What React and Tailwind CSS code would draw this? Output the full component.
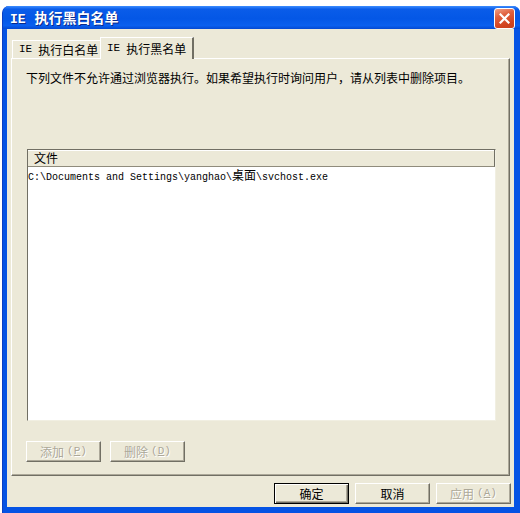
import React from "react";

const CJK = '"Noto Sans CJK SC", "Noto Sans", sans-serif';

const cjk = "font-['Noto_Sans_CJK_SC',sans-serif]";
const mono = "font-['Liberation_Mono','Noto_Sans_CJK_SC',monospace]";

function CloseButton() {
  return (
    <div className="w-[21px] h-[21px] rounded-[3px] border border-white bg-[linear-gradient(160deg,#f0a086_0%,#e0603e_35%,#d2431f_75%,#c8421f_100%)] flex items-center justify-center mt-[2px]">
      <svg width="11" height="11" viewBox="0 0 11 11">
        <path d="M1.5 1.5 L9.5 9.5 M9.5 1.5 L1.5 9.5" stroke="#fff" strokeWidth="2.2" strokeLinecap="square" />
      </svg>
    </div>
  );
}

function Tab({ label, active }) {
  if (active) {
    return (
      <div className="relative z-10 -ml-[1px] -mb-[1px] h-[22px] w-[94px] bg-[#ece9d8] border-t border-l border-white border-r-2 border-r-[#716f64] flex items-center pl-[6px] text-[12px] text-black leading-none">
        <span className={`${mono} text-[11px] mr-[6px]`}>IE</span>
        <span className={cjk}>{label}</span>
      </div>
    );
  }
  return (
    <div className="h-[18px] w-[89px] bg-[#ece9d8] border-t border-l border-white flex items-center pl-[6px] text-[12px] text-black leading-none">
      <span className={`${mono} text-[11px] mr-[6px]`}>IE</span>
      <span className={cjk}>{label}</span>
    </div>
  );
}

function Btn({ label, hot, disabled, isDefault, plain }) {
  const color = disabled ? "text-[#aca899] [text-shadow:1px_1px_0_#fff]" : "text-black";
  return (
    <div
      className={`w-[75px] h-[21px] bg-[#ece9d8] flex items-center justify-center text-[12px] leading-none ${color} ${
        isDefault
          ? "border border-black shadow-[inset_1px_1px_0_#fff,inset_-1px_-1px_0_#716f64,inset_-2px_-2px_0_#aca899]"
          : "border-t border-l border-white border-b border-r border-b-[#716f64] border-r-[#716f64] shadow-[inset_-1px_-1px_0_#aca899]"
      }`}
    >
      <span className={cjk}>{label}</span>
      {!plain && (
        <span className={`${mono} text-[11px] ml-[3px]`}>
          (<span className="underline">{hot}</span>)
        </span>
      )}
    </div>
  );
}

export default function App() {
  return (
    <div className="w-[520px] h-[513px] bg-white pt-[6px] pl-[2px] overflow-hidden" style={{ fontFamily: CJK }}>
      <div className="w-[518px] h-[507px] flex flex-col rounded-t-[7px] bg-[#0553e4] border-l border-l-[#0a3fc4] overflow-hidden">
        {/* title bar */}
        <div className="h-[23px] shrink-0 flex items-center pl-[7px] pr-[5px] bg-[linear-gradient(180deg,#3d8dff_0%,#0a5ce9_14%,#0457e6_55%,#0a60ef_85%,#0449d2_100%)]">
          <div className="flex items-baseline text-white font-bold text-[14px] leading-none [text-shadow:1px_1px_0_#0a2a8a]">
            <span className={`${mono} text-[13px] mr-[9px]`}>IE</span>
            <span className={cjk}>执行黑白名单</span>
          </div>
          <div className="flex-1" />
          <CloseButton />
        </div>

        {/* body */}
        <div className="flex-1 ml-[4px] mr-[6px] mb-[6px] bg-[#ece9d8] flex flex-col">
          {/* tabs */}
          <div className="h-[29px] shrink-0 flex items-end pl-[5px]">
            <Tab label="执行白名单" />
            <Tab label="执行黑名单" active />
          </div>

          {/* panel */}
          <div className="mx-[4px] h-[418px] shrink-0 border-t border-l border-white border-r border-b border-r-[#716f64] border-b-[#716f64] shadow-[inset_-1px_-1px_0_#aca899] flex flex-col">
            <div className="pt-[11px] pl-[14px] text-[12px] leading-[16px] text-black">
              下列文件不允许通过浏览器执行。如果希望执行时询问用户，请从列表中删除项目。
            </div>

            <div className="mt-[63px] ml-[15px] w-[469px] h-[272px] bg-white border-t border-l border-[#716f64] border-b border-r border-b-[#f1efe2] border-r-[#f1efe2] flex flex-col">
              <div className="h-[17px] bg-[#ece9d8] border-b border-b-[#8f8b7c] border-r border-r-[#716f64] flex items-center pl-[6px] text-[12px] leading-none text-black shadow-[inset_0_1px_0_#fff]">
                文件
              </div>
              <div className="h-[16px] flex items-baseline text-black leading-[16px]">
                <span className={`${mono} text-[10px]`}>C:\Documents and Settings\yanghao\</span>
                <span className={`${cjk} text-[12px]`}>桌面</span>
                <span className={`${mono} text-[10px]`}>\svchost.exe</span>
              </div>
            </div>

            <div className="mt-[20px] ml-[14px] flex gap-[9px]">
              <Btn label="添加" hot="P" disabled />
              <Btn label="删除" hot="D" disabled />
            </div>
          </div>

          {/* bottom buttons */}
          <div className="mt-[7px] flex justify-end gap-[6px] pr-[3px]">
            <Btn label="确定" plain isDefault />
            <Btn label="取消" plain />
            <Btn label="应用" hot="A" disabled />
          </div>
        </div>
      </div>
    </div>
  );
}
